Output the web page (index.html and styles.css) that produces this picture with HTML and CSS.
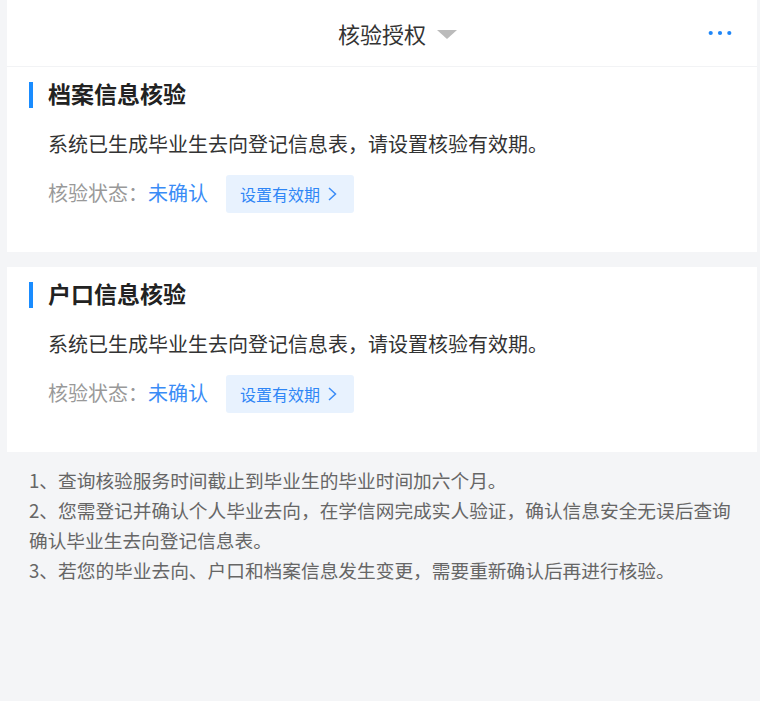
FILE: index.html
```html
<!DOCTYPE html>
<html lang="zh-CN">
    <head>
        <meta charset="utf-8">
        <meta name="viewport" content="width=device-width, initial-scale=1.0">
        <title>核验授权</title>
        <link rel="stylesheet" href="styles.css">
    </head>
    <body>
        <div class="page">
            <div class="topbar">
                <span></span>
                <span class="topbar-title">核验授权</span>
                <span class="topbar-right">
                    <span class="arrow-down"></span>
                    <svg class="more" width="24" height="6" viewBox="0 0 24 6">
                        <circle cx="2.7" cy="3" r="2.1" fill="#1f86f7"/>
                        <circle cx="12" cy="3" r="2.1" fill="#1f86f7"/>
                        <circle cx="21.3" cy="3" r="2.1" fill="#1f86f7"/>
                    </svg>
                </span>
            </div>

            <div class="card">
                <div class="card-title">档案信息核验</div>
                <div class="card-desc">系统已生成毕业生去向登记信息表，请设置核验有效期。</div>
                <div class="status">
                    <span class="status-label">核验状态：</span>
                    <span class="status-value">未确认</span>
                    <button class="btn-set">
                        设置有效期
                        <svg width="10" height="14" viewBox="0 0 10 14"><path d="M2 1 L8.5 7 L2 13" fill="none" stroke="#3b8cf7" stroke-width="1.5"/></svg>
                    </button>
                </div>
            </div>

            <div class="card">
                <div class="card-title">户口信息核验</div>
                <div class="card-desc">系统已生成毕业生去向登记信息表，请设置核验有效期。</div>
                <div class="status">
                    <span class="status-label">核验状态：</span>
                    <span class="status-value">未确认</span>
                    <button class="btn-set">
                        设置有效期
                        <svg width="10" height="14" viewBox="0 0 10 14"><path d="M2 1 L8.5 7 L2 13" fill="none" stroke="#3b8cf7" stroke-width="1.5"/></svg>
                    </button>
                </div>
            </div>
        </div>

        <div class="notes">
            <p>1、查询核验服务时间截止到毕业生的毕业时间加六个月。</p>
            <p>2、您需登记并确认个人毕业去向，在学信网完成实人验证，确认信息安全无误后查询确认毕业生去向登记信息表。</p>
            <p>3、若您的毕业去向、户口和档案信息发生变更，需要重新确认后再进行核验。</p>
        </div>
    </body>
</html>
```

FILE: styles.css
```css
body {
    margin:0;
    background-color:#f4f5f7;
    font-family:"Noto Sans CJK SC", "Noto Sans", sans-serif;
    color:#333;
}

.page {
    margin-left:7px;
    width:750px;
}

.topbar {
    display:grid;
    grid-template-columns:1fr auto 1fr;
    align-items:center;
    height:66px;
    background-color:#fff;
    border-bottom:1px solid #f2f3f5;
}

.topbar-title {
    font-size:22px;
    color:#333;
    line-height:28px;
}

.topbar-right {
    display:flex;
    align-items:center;
    padding-right:25px;
}

.arrow-down {
    width:0;
    height:0;
    margin-left:11px;
    margin-top:2px;
    border-left:10px solid transparent;
    border-right:10px solid transparent;
    border-top:9px solid #bbb;
}

.more {
    margin-left:auto;
    margin-top:-1px;
}

.card {
    background-color:#fff;
    padding:15px 22px 39px;
    margin-bottom:15px;
}

.card:last-child {
    margin-bottom:0;
}

.card-title {
    border-left:4px solid #1a8cff;
    padding-left:15px;
    height:26px;
    line-height:23px;
    font-size:23px;
    font-weight:bold;
    color:#222;
}

.card-desc {
    margin-top:22px;
    padding-left:19px;
    font-size:20px;
    line-height:28px;
    color:#333;
}

.status {
    display:flex;
    align-items:center;
    margin-top:17px;
    padding-left:19px;
    font-size:20px;
    line-height:26px;
}

.status-label {
    color:#999;
    margin-top:-3px;
}

.status-value {
    color:#3a8cf6;
    margin-top:-3px;
}

.btn-set {
    display:flex;
    align-items:center;
    gap:7px;
    height:38px;
    width:128px;
    margin-left:18px;
    padding:0 0 0 14px;
    border:none;
    border-radius:3px;
    background-color:#e8f2fe;
    color:#2f86f6;
    font-family:inherit;
    font-size:16px;
    line-height:20px;
}

.notes {
    padding:13px 18px 0 29px;
    color:#666;
    font-size:18.7px;
    line-height:30px;
}

.notes p {
    margin:0;
}
```
